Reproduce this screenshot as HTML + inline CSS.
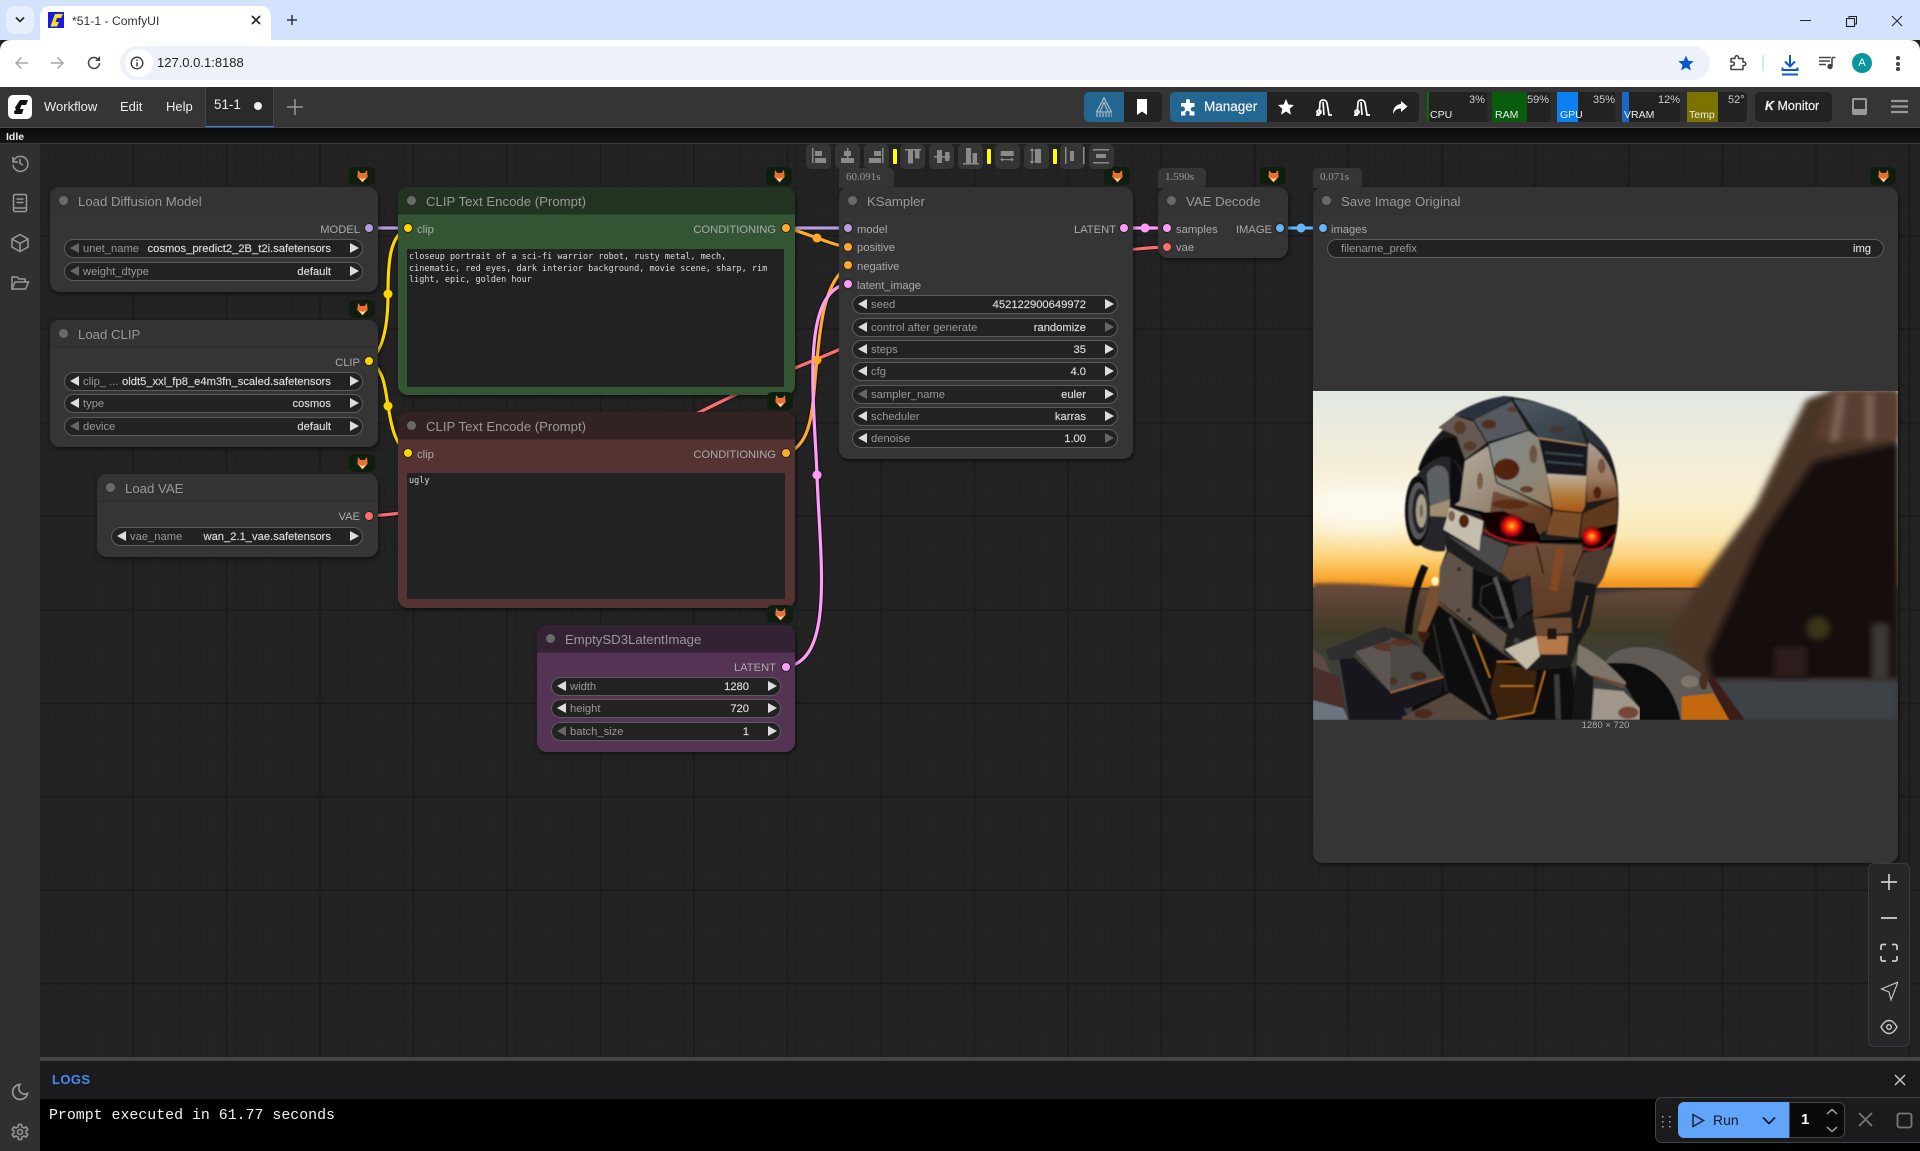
<!DOCTYPE html>
<html><head><meta charset="utf-8"><title>*51-1 - ComfyUI</title>
<style>
*{box-sizing:border-box}
html,body{margin:0;padding:0;width:1920px;height:1151px;overflow:hidden;background:#222;font-family:"Liberation Sans",sans-serif}
div,span,svg,i{position:absolute;white-space:nowrap}
.grid{left:40px;top:144px;width:1880px;height:913px;background-color:#232323;
background-image:linear-gradient(to right,#1b1b1b 1.5px,transparent 1.5px),linear-gradient(to bottom,#1b1b1b 1.5px,transparent 1.5px),linear-gradient(to right,#1f1f1f 1px,transparent 1px),linear-gradient(to bottom,#1f1f1f 1px,transparent 1px);
background-size:93.5px 93.5px,93.5px 93.5px,9.35px 9.35px,9.35px 9.35px;
background-position:-1.2px -96px,-1.2px -96px,-1.2px -96px,-1.2px -96px}
.n{background:#353535;border-radius:10px;box-shadow:1px 2px 5px rgba(0,0,0,.55);overflow:hidden}
.t{left:0;top:0;right:0;height:28px;background:#333;border-bottom:1px solid #2e2e2e;color:#999;font-size:13.2px;line-height:29px;padding-left:28px}
.t i{left:9px;top:9px;width:9px;height:9px;border-radius:50%;background:#6a6a6a}
.lb{font-size:11.2px;color:#aaa;line-height:14px;margin-top:1px}
.w{height:19px;border:1.5px solid #5c5c5c;border-radius:10px;background:#222;font-size:11.2px;line-height:16px;color:#999}
.w .l{left:4.5px;top:3px;width:0;height:0;border-top:5px solid transparent;border-bottom:5px solid transparent;border-right:9px solid #ddd}
.w .r{right:3.5px;top:3px;width:0;height:0;border-top:5px solid transparent;border-bottom:5px solid transparent;border-left:9px solid #ddd}
.w .k{left:18px;top:1px}
.w .v{right:31px;top:1px;color:#ddd;-webkit-text-stroke:.15px #ddd}
.w .d{border-right-color:#666}
.w .e{border-left-color:#666}
.dot{width:8px;height:8px;border-radius:50%;border:1px solid #222;box-sizing:content-box}
.ta{background:#222;font-family:"DejaVu Sans Mono","Liberation Mono",monospace;font-size:8.5px;line-height:11.5px;color:#ddd;padding:3px 2px;white-space:pre}
.fox{width:26px;height:18px;border-radius:5px;background:#0e1e0e}
.tm{height:20px;background:#353535;border-radius:5px 5px 0 0;color:#999;font-family:"Liberation Serif",serif;font-size:11px;line-height:18px;padding-left:7px}
.ab{top:144px;width:25px;height:25px;background:#353535;border-radius:5px}
.yb{top:149px;width:3.5px;height:15px;background:#ff0;border-radius:1px}
.mb{top:92px;height:30px;background:#222;border-radius:0}
.mon{color:#eee;font-size:12px}
.wire{fill:none}
</style></head><body>
<svg width="0" height="0" style="left:0;top:0"><symbol id="fx" viewBox="0 0 11 13"><path d="M1 0 3.500 3H7.500L10 0 10.700 7 5.500 12.500.3 7z" fill="#e9702e"/><path d="M2 7.500 5.500 12 9 7.500 5.500 9z" fill="#f6dcc0"/></symbol></svg>

<!-- browser chrome -->
<div style="left:0;top:0;width:1920px;height:40px;background:#d3e3fd"></div>
<div style="left:6px;top:6px;width:28px;height:28px;background:#e6eefc;border-radius:8px"></div>
<svg style="left:14px;top:15px" width="12" height="10"><path d="M2 2.500 6 6.500 10 2.500" fill="none" stroke="#222" stroke-width="1.600"/></svg>
<div style="left:40px;top:6px;width:231px;height:34px;background:#fff;border-radius:10px 10px 0 0"></div>
<div style="left:48px;top:12px;width:16px;height:16px;background:#1a1ae0"></div>
<svg style="left:48px;top:12px" width="16" height="16"><path d="M7 2h8l-2 4H9l-1.500 4H11l-2 4.500H2.500l1-3z" fill="#f4e616"/></svg>
<div style="left:72px;top:14px;font-size:12.200px;line-height:15px;color:#333">*51-1 - ComfyUI</div>
<svg style="left:250px;top:14px" width="12" height="12"><path d="M2 2 10 10M10 2 2 10" stroke="#222" stroke-width="1.600"/></svg>
<svg style="left:286px;top:14px" width="12" height="12"><path d="M6 1V11M1 6H11" stroke="#333" stroke-width="1.500"/></svg>
<svg style="left:1800px;top:14px" width="120" height="14"><path d="M0 6.500H11" stroke="#222" stroke-width="1"/><rect x="46.500" y="4.500" width="8" height="8" fill="none" stroke="#222" stroke-width="1.100"/><path d="M49 4V2.500H56.500V10H55" fill="none" stroke="#222" stroke-width="1"/><path d="M92 2 102 12M102 2 92 12" stroke="#222" stroke-width="1"/></svg>
<div style="left:0;top:40px;width:1920px;height:47px;background:#fff;border-radius:10px 10px 0 0"></div>
<svg style="left:14px;top:55px" width="90" height="16" fill="none"><path d="M14 8H2M7.500 2.500 2 8l5.500 5.500" stroke="#a3a6ab" stroke-width="1.500"/><path d="M37 8H49M43.500 2.500 49 8l-5.500 5.500" stroke="#a3a6ab" stroke-width="1.500"/><path d="M85.500 8A5.500 5.500 0 1 1 84 4.200" stroke="#444" stroke-width="1.500"/><path d="M85.500 1.500V5.500H81.500" fill="#444" stroke="#444" stroke-width="1"/></svg>
<div style="left:120px;top:46px;width:1590px;height:34px;border-radius:17px;background:#edf2fa"></div>
<div style="left:125px;top:49px;width:28px;height:28px;border-radius:50%;background:#fff"></div>
<svg style="left:130px;top:56px" width="14" height="14" fill="none"><circle cx="7" cy="7" r="5.800" stroke="#333" stroke-width="1.300"/><path d="M7 6.200V10.500M7 3.500V5" stroke="#333" stroke-width="1.400"/></svg>
<div style="left:157px;top:55px;font-size:13px;line-height:16px;color:#222">127.0.0.1:8188</div>
<svg style="left:1677px;top:54px" width="18" height="18"><path d="M9 1.500 11.200 6.700 16.800 7.200 12.500 10.900 13.800 16.400 9 13.500 4.200 16.400 5.500 10.900 1.200 7.200 6.800 6.700z" fill="#0b57d0"/></svg>
<svg style="left:1728px;top:53px" width="20" height="20" fill="none"><path d="M3 5.500H7V4.500a1.800 1.800 0 0 1 3.600 0V5.500H15V9h1a1.800 1.800 0 0 1 0 3.600h-1V16.500H3V12.500H5a1.800 1.800 0 0 0 0-3.500H3z" stroke="#444" stroke-width="1.500"/></svg>
<div style="left:1762px;top:55px;width:1.500px;height:16px;background:#d3e3fd"></div>
<svg style="left:1781px;top:54px" width="18" height="22" fill="none" stroke="#0b57d0" stroke-width="2"><path d="M9 1V12M4 7.500 9 12.500 14 7.500M1.500 13.500V16H16.500V13.500"/><path d="M1 20.500H17"/></svg>
<svg style="left:1819px;top:56px" width="17" height="14" fill="none" stroke="#444" stroke-width="1.400"><path d="M0 1.500H12M0 5H11M0 8.500H7"/><path d="M13 2V10" stroke-width="1.600"/><path d="M13 1.500H16.500"/><circle cx="11" cy="10.500" r="2" fill="#444"/></svg>
<div style="left:1852px;top:53px;width:20px;height:20px;border-radius:50%;background:#07979f;color:#fff;font-size:11px;line-height:20px;text-align:center">A</div>
<div style="left:1896px;top:56px;width:3.500px;height:3.500px;border-radius:50%;background:#444"></div>
<div style="left:1896px;top:62px;width:3.500px;height:3.500px;border-radius:50%;background:#444"></div>
<div style="left:1896px;top:67px;width:3.500px;height:3.500px;border-radius:50%;background:#444"></div>

<!-- menu bar -->
<div style="left:0;top:87px;width:1920px;height:41px;background:#353535;border-bottom:1px solid #4a4a4a"></div>
<div style="left:8px;top:95px;width:24px;height:24px;border-radius:5px;background:#fff"></div>
<svg style="left:8px;top:95px" width="24" height="24"><path d="M12 5h8l-2 5h-4.500L12 14h3.500L14 19H6.500l-.5-2.500 2-2-1-2z" fill="#111"/></svg>
<div style="left:44px;top:99px;font-size:13px;line-height:16px;color:#eee">Workflow</div>
<div style="left:120px;top:99px;font-size:13px;line-height:16px;color:#eee">Edit</div>
<div style="left:166px;top:99px;font-size:13px;line-height:16px;color:#eee">Help</div>
<div style="left:205px;top:87px;width:69px;height:40px;background:#2a2a2a;border-left:1px solid #444;border-right:1px solid #444;border-bottom:1.500px solid #3b82f6"></div>
<div style="left:214px;top:97px;font-size:13.400px;line-height:16px;color:#eee">51-1</div>
<div style="left:254px;top:102px;width:8px;height:8px;border-radius:50%;background:#eee"></div>
<svg style="left:287px;top:99px" width="16" height="16"><path d="M8 0V16M0 8H16" stroke="#999" stroke-width="1.500"/></svg>

<!-- top right tools -->
<div class="mb" style="left:1124px;width:38px;border-radius:0 5px 5px 0"></div>
<div class="mb" style="left:1084px;width:40px;background:#236692;border-radius:5px 0 0 5px"></div>
<svg style="left:1095px;top:97px" width="18" height="20" fill="none" stroke="#ccc" stroke-width="1"><path d="M9 1 1.500 15H16.500zM9 5 5 15M9 5 13 15"/><path d="M1 17H17M1 19H17" stroke-dasharray="2 1"/></svg>
<svg style="left:1136px;top:98px" width="12" height="18"><path d="M1 1H11V17L6 13.500 1 17z" fill="#fff"/></svg>
<div class="mb" style="left:1267px;width:152px;border-radius:0 5px 5px 0"></div>
<div class="mb" style="left:1170px;width:97px;background:#236692;border-radius:5px 0 0 5px"></div>
<svg style="left:1180px;top:99px" width="17" height="17"><path d="M6 1a2.200 2.200 0 0 1 4 1.500V4h4.500v4H13a2.200 2.200 0 1 0 0 4.400h1.500V16.500H9.500V15a2.200 2.200 0 1 0-4 0v1.500H1v-4h1.500a2.500 2.500 0 0 0 0-5H1V4h5z" fill="#fff"/></svg>
<div style="left:1204px;top:99px;font-size:13.500px;line-height:16px;color:#f2f2f2;-webkit-text-stroke:.2px #f2f2f2">Manager</div>
<svg style="left:1277px;top:98px" width="18" height="18"><path d="M9 1 11.300 6.500 17 7 12.700 10.800 14 16.700 9 13.500 4 16.700 5.300 10.800 1 7 6.700 6.500z" fill="#fff"/></svg>
<svg style="left:1314px;top:97px" width="60" height="20" fill="none" stroke="#fff" stroke-width="1.700"><path d="M2 18H5L6 6C6 2 12 2 13 6L15 18H18M9 5 10 18"/><circle cx="5" cy="15" r="2"/><path d="M40 18H43L44 6C44 2 50 2 51 6L53 18H56M47 5 48 18"/><circle cx="43" cy="15" r="2"/></svg>
<svg style="left:1392px;top:100px" width="16" height="15"><path d="M9 1 15.500 6.500 9 12V8.500C5 8.500 3 10 1 14 1 8 4 4.500 9 4z" fill="#fff"/></svg>

<div style="left:1427px;top:92px;width:320px;height:30px;background:#222;border-radius:5px"></div>
<div style="left:1487px;top:92px;width:5px;height:30px;background:#2c2c2c"></div>
<div style="left:1550px;top:92px;width:7px;height:30px;background:#2c2c2c"></div>
<div style="left:1615px;top:92px;width:7px;height:30px;background:#2c2c2c"></div>
<div style="left:1680px;top:92px;width:7px;height:30px;background:#2c2c2c"></div>
<div style="left:1427px;top:92px;width:2px;height:30px;background:#0a6a0a"></div>
<div style="left:1492px;top:92px;width:35px;height:30px;background:#075c0d"></div>
<div style="left:1557px;top:92px;width:21px;height:30px;background:#0b80f0"></div>
<div style="left:1622px;top:92px;width:7px;height:30px;background:#1767c3"></div>
<div style="left:1687px;top:92px;width:31px;height:30px;background:#7c7200"></div>
<div class="mon" style="left:1430px;top:108px;font-size:10.500px;line-height:14px">CPU</div>
<div class="mon" style="left:1495px;top:108px;font-size:10.500px;line-height:14px">RAM</div>
<div class="mon" style="left:1560px;top:108px;font-size:10.500px;line-height:14px">GPU</div>
<div class="mon" style="left:1624px;top:108px;font-size:10.500px;line-height:14px">VRAM</div>
<div class="mon" style="left:1689px;top:108px;font-size:10.500px;line-height:14px">Temp</div>
<div class="mon" style="left:1469px;top:93px;font-size:11px;line-height:14px;color:#ccc">3%</div>
<div class="mon" style="left:1527px;top:93px;font-size:11px;line-height:14px;color:#ccc">59%</div>
<div class="mon" style="left:1593px;top:93px;font-size:11px;line-height:14px;color:#ccc">35%</div>
<div class="mon" style="left:1658px;top:93px;font-size:11px;line-height:14px;color:#ccc">12%</div>
<div class="mon" style="left:1728px;top:93px;font-size:11px;line-height:14px;color:#ccc">52°</div>
<div style="left:1755px;top:92px;width:77px;height:30px;background:#222;border-radius:5px;font-size:12.500px;line-height:29px;color:#eee;padding-left:10px;-webkit-text-stroke:.2px #eee"><b style="font-style:italic">K</b> Monitor</div>
<svg style="left:1852px;top:98px" width="15" height="17"><rect x="0" y="0" width="15" height="17" rx="2" fill="#999"/><rect x="2" y="2" width="11" height="9" fill="#353535"/></svg>
<svg style="left:1891px;top:99px" width="17" height="15"><path d="M0 2H17M0 7.500H17M0 13H17" stroke="#999" stroke-width="2.200"/></svg>

<!-- idle bar -->
<div style="left:0;top:128px;width:1920px;height:16px;background:linear-gradient(#0a0a0a,#161616);border-bottom:1px solid #3a3a3a"></div>
<div style="left:6px;top:130px;font-size:10.500px;line-height:14px;color:#eee;font-weight:bold">Idle</div>

<!-- canvas -->
<div class="grid"></div>

<!-- links -->
<svg style="left:0;top:0" width="1920" height="1151" class="wire">
<g stroke="#161616" stroke-width="5.500" fill="none">
<path d="M369 228H848"/>
<path d="M369 361C385 350 388 320 388 294C388 260 390 235 408 228"/>
<path d="M369 361C385 370 385 390 388 405C391 425 395 445 408 453"/>
<path d="M786 228C800 230 830 245 848 247"/>
<path d="M786 453C815 445 812 400 817 360C821 320 825 282 848 266"/>
<path d="M369 516C480 510 620 450 700 412C740 392 770 378 817 359C900 325 1040 250 1167 247"/>
<path d="M786 667C835 660 820 560 817 475C814 400 800 290 848 284"/>
<path d="M1124 228H1167"/><path d="M1280 228H1322"/>
</g>
<g fill="none" stroke-width="3.200">
<path d="M369 228H848" stroke="#b39ddb"/>
<path d="M369 361C385 350 388 320 388 294C388 260 390 235 408 228" stroke="#ffd500"/>
<path d="M369 361C385 370 385 390 388 405C391 425 395 445 408 453" stroke="#ffd500"/>
<path d="M369 516C480 510 620 450 700 412C740 392 770 378 817 359C900 325 1040 250 1167 247" stroke="#ff6e6e"/>
<path d="M786 228C800 230 830 245 848 247" stroke="#ffa931"/>
<path d="M786 453C815 445 812 400 817 360C821 320 825 282 848 266" stroke="#ffa931"/>
<path d="M786 667C835 660 820 560 817 475C814 400 800 290 848 284" stroke="#ff9cf9"/>
<path d="M1124 228H1167" stroke="#ff9cf9"/><path d="M1280 228H1322" stroke="#64b5f6"/>
</g>
<circle cx="388" cy="294" r="4.500" fill="#ffd500"/><circle cx="388" cy="406" r="4.500" fill="#ffd500"/>
<circle cx="817" cy="238" r="4.500" fill="#ffa931"/><circle cx="817" cy="360" r="4.500" fill="#ffa931"/>
<circle cx="817" cy="475" r="4.500" fill="#ff9cf9"/><circle cx="1145" cy="228" r="4.500" fill="#ff9cf9"/><circle cx="1301" cy="228" r="4.500" fill="#64b5f6"/>
</svg>

<!-- Load Diffusion -->
<div class="n" style="left:50px;top:187px;width:328px;height:105px"><div class="t"><i></i>Load Diffusion Model</div></div>
<div class="lb" style="left:300px;top:222px;width:60px;text-align:right">MODEL</div>
<div class="w" style="left:64px;top:239px;width:299px"><i class="l d"></i><span class="k">unet_name</span><span class="v">cosmos_predict2_2B_t2i.safetensors</span><i class="r"></i></div>
<div class="w" style="left:64px;top:262px;width:299px"><i class="l d"></i><span class="k">weight_dtype</span><span class="v">default</span><i class="r"></i></div>

<!-- Load CLIP -->
<div class="n" style="left:50px;top:320px;width:328px;height:127px"><div class="t"><i></i>Load CLIP</div></div>
<div class="lb" style="left:300px;top:355px;width:60px;text-align:right">CLIP</div>
<div class="w" style="left:64px;top:372px;width:299px"><i class="l"></i><span class="k">clip_ ...</span><span class="v">oldt5_xxl_fp8_e4m3fn_scaled.safetensors</span><i class="r"></i></div>
<div class="w" style="left:64px;top:394px;width:299px"><i class="l"></i><span class="k">type</span><span class="v">cosmos</span><i class="r"></i></div>
<div class="w" style="left:64px;top:417px;width:299px"><i class="l d"></i><span class="k">device</span><span class="v">default</span><i class="r"></i></div>

<!-- Load VAE -->
<div class="n" style="left:97px;top:474px;width:281px;height:83px"><div class="t"><i></i>Load VAE</div></div>
<div class="lb" style="left:300px;top:509px;width:60px;text-align:right">VAE</div>
<div class="w" style="left:111px;top:527px;width:252px"><i class="l"></i><span class="k">vae_name</span><span class="v">wan_2.1_vae.safetensors</span><i class="r"></i></div>

<!-- CLIP green -->
<div class="n" style="left:398px;top:187px;width:397px;height:208px;background:#335533"><div class="t" style="background:#223322;border-color:#2a402a"><i></i>CLIP Text Encode (Prompt)</div></div>
<div class="lb" style="left:417px;top:222px">clip</div>
<div class="lb" style="left:660px;top:222px;width:116px;text-align:right">CONDITIONING</div>
<div class="ta" style="left:407px;top:249px;width:377px;height:138px">closeup portrait of a sci-fi warrior robot, rusty metal, mech,
cinematic, red eyes, dark interior background, movie scene, sharp, rim
light, epic, golden hour</div>

<!-- CLIP red -->
<div class="n" style="left:398px;top:412px;width:397px;height:196px;background:#553333"><div class="t" style="background:#332222;border-color:#452c2c"><i></i>CLIP Text Encode (Prompt)</div></div>
<div class="lb" style="left:417px;top:447px">clip</div>
<div class="lb" style="left:660px;top:447px;width:116px;text-align:right">CONDITIONING</div>
<div class="ta" style="left:407px;top:473px;width:378px;height:126px">ugly</div>

<!-- Empty latent -->
<div class="n" style="left:537px;top:625px;width:258px;height:127px;background:#553355"><div class="t" style="background:#332233;border-color:#452c45"><i></i>EmptySD3LatentImage</div></div>
<div class="lb" style="left:716px;top:660px;width:60px;text-align:right">LATENT</div>
<div class="w" style="left:551px;top:677px;width:230px"><i class="l"></i><span class="k">width</span><span class="v">1280</span><i class="r"></i></div>
<div class="w" style="left:551px;top:699px;width:230px"><i class="l"></i><span class="k">height</span><span class="v">720</span><i class="r"></i></div>
<div class="w" style="left:551px;top:722px;width:230px"><i class="l d"></i><span class="k">batch_size</span><span class="v">1</span><i class="r"></i></div>

<!-- KSampler -->
<div class="tm" style="left:839px;top:168px;width:55px">60.091s</div>
<div class="n" style="left:839px;top:187px;width:294px;height:272px"><div class="t"><i></i>KSampler</div></div>
<div class="lb" style="left:857px;top:222px">model</div>
<div class="lb" style="left:857px;top:240px">positive</div>
<div class="lb" style="left:857px;top:259px">negative</div>
<div class="lb" style="left:857px;top:278px">latent_image</div>
<div class="lb" style="left:1050px;top:222px;width:66px;text-align:right">LATENT</div>
<div class="w" style="left:852px;top:295px;width:266px"><i class="l"></i><span class="k">seed</span><span class="v">452122900649972</span><i class="r"></i></div>
<div class="w" style="left:852px;top:318px;width:266px"><i class="l"></i><span class="k">control after generate</span><span class="v">randomize</span><i class="r e"></i></div>
<div class="w" style="left:852px;top:340px;width:266px"><i class="l"></i><span class="k">steps</span><span class="v">35</span><i class="r"></i></div>
<div class="w" style="left:852px;top:362px;width:266px"><i class="l"></i><span class="k">cfg</span><span class="v">4.0</span><i class="r"></i></div>
<div class="w" style="left:852px;top:385px;width:266px"><i class="l d"></i><span class="k">sampler_name</span><span class="v">euler</span><i class="r"></i></div>
<div class="w" style="left:852px;top:407px;width:266px"><i class="l"></i><span class="k">scheduler</span><span class="v">karras</span><i class="r"></i></div>
<div class="w" style="left:852px;top:429px;width:266px"><i class="l"></i><span class="k">denoise</span><span class="v">1.00</span><i class="r e"></i></div>

<!-- VAE Decode -->
<div class="tm" style="left:1158px;top:168px;width:48px">1.590s</div>
<div class="n" style="left:1158px;top:187px;width:130px;height:71px"><div class="t"><i></i>VAE Decode</div></div>
<div class="lb" style="left:1176px;top:222px">samples</div>
<div class="lb" style="left:1176px;top:240px">vae</div>
<div class="lb" style="left:1212px;top:222px;width:60px;text-align:right">IMAGE</div>

<!-- Save Image -->
<div class="tm" style="left:1313px;top:168px;width:49px">0.071s</div>
<div class="n" style="left:1313px;top:187px;width:585px;height:676px"><div class="t"><i></i>Save Image Original</div></div>
<div class="lb" style="left:1331px;top:222px">images</div>
<div class="w" style="left:1327px;top:239px;width:557px"><span class="k" style="left:13px">filename_prefix</span><span class="v" style="right:12px">img</span></div>

<svg style="left:1313px;top:391px" width="585" height="329" viewBox="33 33 1479 987" preserveAspectRatio="none">
<defs>
<linearGradient id="sky" x1="0" y1="0" x2="0" y2="1"><stop offset="0" stop-color="#e2e8e2"/><stop offset=".28" stop-color="#f0ecdb"/><stop offset=".54" stop-color="#f9f0d2"/><stop offset=".72" stop-color="#fae9b8"/><stop offset=".84" stop-color="#fcd47e"/><stop offset=".93" stop-color="#fab23e"/><stop offset="1" stop-color="#f09018"/></linearGradient>
<linearGradient id="gr" x1="0" y1="0" x2="0" y2="1"><stop offset="0" stop-color="#6a4c3c"/><stop offset=".2" stop-color="#544030"/><stop offset=".36" stop-color="#403b26"/><stop offset=".52" stop-color="#3e3f34"/><stop offset="1" stop-color="#3c4144"/></linearGradient>
<linearGradient id="fh" x1="0" y1="0" x2="0" y2="1"><stop offset="0" stop-color="#bcb2a4"/><stop offset=".55" stop-color="#b07a3c"/><stop offset="1" stop-color="#a8560f"/></linearGradient>
<linearGradient id="top" x1="0" y1="0" x2="1" y2="1"><stop offset="0" stop-color="#4e5964"/><stop offset="1" stop-color="#2f3840"/></linearGradient>
<linearGradient id="fc" x1="0" y1="0" x2="0" y2="1"><stop offset="0" stop-color="#6a4c38"/><stop offset="1" stop-color="#5c3a22"/></linearGradient>
<linearGradient id="mf" x1="0" y1="0" x2="1" y2="1"><stop offset="0" stop-color="#80878c"/><stop offset=".7" stop-color="#8d8676"/><stop offset="1" stop-color="#a07a58"/></linearGradient>
<linearGradient id="rf" x1="0" y1="0" x2="0" y2="1"><stop offset="0" stop-color="#a89e94"/><stop offset=".6" stop-color="#9a7a60"/><stop offset="1" stop-color="#70401e"/></linearGradient>
<linearGradient id="sd" x1="0" y1="0" x2="1" y2="1"><stop offset="0" stop-color="#b8ae9e"/><stop offset=".6" stop-color="#8e806e"/><stop offset="1" stop-color="#55301a"/></linearGradient>
<radialGradient id="eye"><stop offset="0" stop-color="#ffd848"/><stop offset=".22" stop-color="#ff6a10"/><stop offset=".48" stop-color="#ff1208"/><stop offset=".75" stop-color="#a00808" stop-opacity=".7"/><stop offset="1" stop-color="#500" stop-opacity="0"/></radialGradient>
<filter id="b40" x="-50%" y="-50%" width="200%" height="200%"><feGaussianBlur stdDeviation="40"/></filter>
<filter id="b8" x="-20%" y="-20%" width="140%" height="140%"><feGaussianBlur stdDeviation="9"/></filter>
<filter id="b1"><feGaussianBlur stdDeviation="1.200"/></filter>
<filter id="b2"><feGaussianBlur stdDeviation="2"/></filter>
<filter id="b4" x="-50%" y="-50%" width="200%" height="200%"><feGaussianBlur stdDeviation="5"/></filter>
<clipPath id="cl"><rect x="33" y="33" width="1479" height="987"/></clipPath>
</defs>
<g clip-path="url(#cl)">
<rect x="33" y="33" width="1479" height="590" fill="url(#sky)"/>
<ellipse cx="170" cy="385" rx="190" ry="70" fill="#fff" opacity=".75" filter="url(#b40)"/>
<path d="M33 610C150 605 250 620 350 632L750 642C850 625 950 628 1010 630V1020H33Z" fill="url(#gr)" filter="url(#b4)"/>
<path d="M1340 33H1512V905H1010L925 780 1000 625 1150 380 1280 60Z" fill="#4a3628" filter="url(#b8)"/>
<path d="M1345 33H1512V180H1300Z" fill="#5a3e32" filter="url(#b8)"/>
<path d="M1370 40 1350 185M1440 40V180" stroke="#806a58" stroke-width="20" filter="url(#b8)"/>
<path d="M1512 190 1300 245 1170 470 1030 830 1040 900H1512Z" fill="#15100d" filter="url(#b8)"/>
<path d="M1040 900H1512V1020H1100Z" fill="#3c4347" filter="url(#b8)"/>
<ellipse cx="1310" cy="745" rx="30" ry="35" fill="#3a3615" filter="url(#b8)"/>
<rect x="1445" y="730" width="45" height="170" fill="#3a3836" filter="url(#b8)"/>
<rect x="1200" y="800" width="80" height="90" fill="#2d1e1e" filter="url(#b8)"/>
<g filter="url(#b1)">
<!-- left shoulder outer -->
<path d="M33 808 62 835 122 1020H33Z" fill="#5c4a44"/>
<path d="M33 860 100 890 120 1020H33Z" fill="#4a2f2a"/>
<path d="M33 960 110 985 122 1020H33Z" fill="#6a7580"/>
<path d="M100 835 135 830 240 950 280 1020H125Z" fill="#13141a"/>
<path d="M65 810 210 740 270 770 140 815 135 835 75 840Z" fill="#2e2d2e"/>
<path d="M140 815 258 768 365 885 235 945Z" fill="#5c5652"/>
<ellipse cx="230" cy="800" rx="45" ry="14" fill="#5a2d20" opacity=".8"/>
<!-- right shoulder outer -->
<path d="M770 850C790 800 870 780 950 830C1030 880 1080 960 1125 1020H960C950 930 900 860 830 850C800 845 775 850 770 850Z" fill="#5f5a55"/>
<path d="M775 850 835 850C900 860 950 930 962 1020H820L850 970 815 900Z" fill="#080808"/>
<path d="M965 950 1045 940 1085 1020H965Z" fill="#c4680f"/>
<path d="M1045 890 1125 1020H1085L1030 900Z" fill="#3a1f14"/>
<ellipse cx="985" cy="905" rx="22" ry="18" fill="#7d766c"/>
<ellipse cx="1020" cy="905" rx="10" ry="25" fill="#4a2d20"/>
</g>
</g>
</svg>

<!-- robot head, detail layer -->
<svg style="left:1390px;top:391px" width="250" height="329" viewBox="0 0 750 987">
<g filter="url(#b2)">
<!-- neck -->
<path d="M140 640 340 790 420 840 540 820 600 987H60L110 720Z" fill="#0b0b0c"/>
<path d="M320 815 440 840 430 960 325 980 300 900Z" fill="#3c2010"/>
<path d="M330 885H430M465 840 430 965 320 985M250 730 300 860M320 812H440" stroke="#d08020" stroke-width="4" fill="none"/>
<path d="M180 680 300 970" stroke="#45413d" stroke-width="10"/>
<path d="M500 850 505 985" stroke="#3a3a3a" stroke-width="16"/>
<path d="M545 830 575 985M130 700 170 900" stroke="#222224" stroke-width="8"/>
<!-- cable -->
<path d="M120 585 150 585 145 640 110 720 80 730Z" fill="#7a5030"/>
<path d="M105 525C80 580 60 650 55 730" stroke="#0f0f10" stroke-width="22" fill="none"/>
<ellipse cx="135" cy="570" rx="11" ry="13" fill="#fff6c0"/>
<!-- head base -->
<path d="M85 235C110 150 190 60 340 15C470 25 600 90 650 170C690 240 690 340 680 420L665 490 620 570 590 700 545 820 420 840 340 780 240 710 145 625 150 530 170 480 160 420 180 350Z" fill="#1e1e1f"/>
<!-- ear -->
<path d="M85 235C110 170 150 130 195 140L225 205 225 320H150Z" fill="#101011"/>
<path d="M150 200C190 185 225 230 225 290L205 350 175 350 165 480C100 490 45 440 45 360C45 290 90 220 150 200Z" fill="#26282b"/>
<path d="M110 250C130 215 165 215 175 250L180 345 120 345Z" fill="#5d6064"/>
<path d="M120 345 180 325 175 378 120 375Z" fill="#a08c72"/>
<path d="M180 200C205 215 220 250 222 300L205 345 180 345Z" fill="#0f1012"/>
<ellipse cx="82" cy="360" rx="37" ry="105" fill="#0d0d0e"/>
<ellipse cx="85" cy="360" rx="30" ry="85" fill="#55565a"/>
<ellipse cx="90" cy="360" rx="23" ry="68" fill="#202022"/>
<ellipse cx="94" cy="360" rx="16" ry="50" fill="#a89d88"/>
<ellipse cx="94" cy="360" rx="5" ry="20" fill="#6d6657"/>
<!-- dome panels -->
<path d="M195 70C240 40 300 20 345 15L365 25 250 85Z" fill="#2b333c"/>
<path d="M250 87 365 30 415 118 290 155Z" fill="#55595e"/>
<path d="M370 25C450 30 530 60 560 80L590 160 445 140 420 100Z" fill="url(#top)"/>
<path d="M565 85C610 120 640 150 660 190L595 150Z" fill="#2c3138"/>
<path d="M145 110 195 72 250 90 290 155 225 205 200 135Z" fill="#655a52"/>
<path d="M295 160 415 120 445 140 470 250 485 350 320 275Z" fill="url(#mf)"/>
<path d="M225 210 295 165 320 275 480 355 485 400 450 430 410 395 270 360 190 345 210 330Z" fill="url(#sd)"/>
<path d="M310 300 480 355 485 430 410 395 300 360Z" fill="#643a22" opacity=".75"/>
<path d="M450 150 585 165 585 250 470 240Z" fill="#12171c"/>
<path d="M465 185 580 195M470 212 580 222" stroke="#3a4650" stroke-width="6"/>
<path d="M438 140 590 163" stroke="#b98a62" stroke-width="4"/>
<path d="M470 248 590 255 585 345 575 365 490 355Z" fill="url(#fh)"/>
<path d="M595 155C640 180 680 250 682 318L590 335 590 255Z" fill="url(#rf)"/>
<path d="M490 358 575 368 565 440 470 430Z" fill="#7a4e2c"/>
<path d="M580 365 682 320 680 405 570 440Z" fill="#5e3a1e"/>
<path d="M160 415 180 350 280 390 268 480Z" fill="#c6bead"/>
<!-- rust -->
<g fill="#52240e">
<ellipse cx="350" cy="235" rx="38" ry="32"/><ellipse cx="297" cy="100" rx="22" ry="14" opacity=".8"/><ellipse cx="222" cy="390" rx="15" ry="20"/>
<ellipse cx="410" cy="295" rx="20" ry="10" opacity=".7"/><ellipse cx="622" cy="305" rx="12" ry="18"/><ellipse cx="360" cy="340" rx="55" ry="14" opacity=".7"/>
<ellipse cx="240" cy="165" rx="20" ry="14" opacity=".6"/><ellipse cx="210" cy="110" rx="18" ry="20" opacity=".6"/><ellipse cx="500" cy="115" rx="22" ry="10" opacity=".45"/>
<ellipse cx="430" cy="190" rx="12" ry="28" opacity=".5"/><ellipse cx="370" cy="55" rx="18" ry="8" opacity=".5"/><ellipse cx="635" cy="225" rx="12" ry="22" opacity=".5"/><ellipse cx="270" cy="270" rx="9" ry="25" opacity=".5"/><ellipse cx="185" cy="375" rx="10" ry="16" opacity=".6"/>
</g>
<path d="M320 275 485 352 490 358 575 366 682 320M190 345 275 365M295 160 320 275M250 87 290 155 415 118M225 208 295 160M365 25 445 140M195 72 250 90" stroke="#0c0c0c" stroke-width="3.500" fill="none"/>
<!-- eye sockets -->
<path d="M270 365 340 360 430 400 450 450 350 455 300 430Z" fill="#150404"/>
<path d="M572 452 610 420 675 405 665 465 590 475Z" fill="#150505"/>
<path d="M280 415C310 440 360 458 440 458M578 472C620 482 650 475 672 430" stroke="#c81414" stroke-width="4" fill="none"/>
<path d="M190 345 275 365 320 395 430 400 450 452 570 450 600 420 680 403" stroke="#060606" stroke-width="8" fill="none"/>
<ellipse cx="365" cy="405" rx="42" ry="40" fill="url(#eye)"/>
<ellipse cx="605" cy="436" rx="36" ry="34" fill="url(#eye)"/>
<!-- face -->
<path d="M345 470 440 457 575 462 580 490 555 570 540 660 430 680 420 555 360 570 330 540Z" fill="url(#fc)"/>
<path d="M512 470 490 600" stroke="#8c4a1e" stroke-width="24" opacity=".8"/>
<path d="M440 465 460 548M580 480 550 555M355 465 330 540" stroke="#111" stroke-width="4"/>
<path d="M580 485 670 470 640 560 590 640 555 570Z" fill="#4c3a2e"/>
<path d="M170 432 268 482 272 430 355 465 330 545 250 490Z" fill="#4c4a48"/>
<path d="M175 482 248 530 245 650 350 730 340 785 145 625 150 530Z" fill="#5e5248"/>
<path d="M250 535 360 575 420 555 430 665 375 690 340 710 250 650Z" fill="#090909"/>
<path d="M275 590 320 570 350 680 310 680 270 640Z" fill="none" stroke="#36363a" stroke-width="4"/>
<path d="M315 560 365 710" stroke="#7d7d7d" stroke-width="13" stroke-dasharray="2.500 2.500"/>
<path d="M365 585 415 550 430 650 385 685Z" fill="#2c2c2e"/>
<path d="M375 690 545 680 550 715 535 830 415 838 345 780 380 745Z" fill="#1e1d1c"/>
<path d="M430 683 545 680 545 725 440 735Z" fill="#6c4a32"/>
<path d="M440 735 535 735 530 790 450 790Z" fill="#b5784a"/>
<rect x="472" y="712" width="28" height="33" fill="#1a1410"/>
<path d="M345 775 440 735 450 795 410 835Z" fill="#c4bba9"/>
<circle cx="380" cy="750" r="10" fill="#3a3a3a"/>
<path d="M555 570 620 580 600 700 560 770 545 680Z" fill="#141312"/>
<path d="M592 615 566 710" stroke="#a06a3a" stroke-width="4" stroke-dasharray="5 3"/>
<circle cx="207" cy="535" r="6" fill="#2c2a28"/><circle cx="205" cy="658" r="6" fill="#2c2a28"/><circle cx="238" cy="685" r="6" fill="#2c2a28"/>
<!-- near shoulders -->
<path d="M0 712 35 725 90 765 0 738Z" fill="#2b2b2c"/>
<path d="M80 720 122 725 100 760Z" fill="#3a1a10"/>
<path d="M0 737 80 765 160 855 5 905 0 905Z" fill="#4e4844"/>
<ellipse cx="35" cy="755" rx="35" ry="10" fill="#5a2d20" opacity=".85"/><ellipse cx="85" cy="855" rx="25" ry="14" fill="#3e2218" opacity=".85"/><ellipse cx="10" cy="870" rx="12" ry="12" fill="#4a2a1c" opacity=".8"/>
<path d="M0 905 160 858" stroke="#b56a30" stroke-width="4"/>
<path d="M0 908 165 862 150 910 60 950 0 960Z" fill="#18191a"/>
<path d="M35 978 180 905 300 987H35Z" fill="#54483e"/>
<ellipse cx="100" cy="968" rx="28" ry="14" fill="#4a2416" opacity=".8"/>
<path d="M565 760C610 780 660 820 710 875L700 890 610 860 560 820Z" fill="#7c7468"/>
<path d="M605 855 705 885" stroke="#6a3a20" stroke-width="7"/>
<path d="M560 820 610 860 605 987H545Z" fill="#121212"/>
<path d="M612 892 700 900 750 950V987H605Z" fill="#a09689"/>
<ellipse cx="715" cy="965" rx="30" ry="18" fill="#6a3020" opacity=".8"/>
</g>
</svg>
<div style="left:1313px;top:720px;width:585px;text-align:center;font-size:9.500px;line-height:12px;color:#aaa">1280 × 720</div>

<!-- slots -->
<i class="dot" style="left:364px;top:223px;background:#b39ddb"></i>
<i class="dot" style="left:364px;top:356px;background:#ffd500"></i>
<i class="dot" style="left:364px;top:511px;background:#ff6e6e"></i>
<i class="dot" style="left:403px;top:223px;background:#ffd500"></i>
<i class="dot" style="left:781px;top:223px;background:#ffa931"></i>
<i class="dot" style="left:403px;top:448px;background:#ffd500"></i>
<i class="dot" style="left:781px;top:448px;background:#ffa931"></i>
<i class="dot" style="left:781px;top:662px;background:#ff9cf9"></i>
<i class="dot" style="left:843px;top:223px;background:#b39ddb"></i>
<i class="dot" style="left:843px;top:242px;background:#ffa931"></i>
<i class="dot" style="left:843px;top:260px;background:#ffa931"></i>
<i class="dot" style="left:843px;top:279px;background:#ff9cf9"></i>
<i class="dot" style="left:1119px;top:223px;background:#ff9cf9"></i>
<i class="dot" style="left:1162px;top:223px;background:#ff9cf9"></i>
<i class="dot" style="left:1162px;top:242px;background:#ff6e6e"></i>
<i class="dot" style="left:1275px;top:223px;background:#64b5f6"></i>
<i class="dot" style="left:1318px;top:223px;background:#64b5f6"></i>

<!-- fox badges -->
<div class="fox" style="left:349px;top:167px"></div><svg style="left:357px;top:170px" width="11" height="13"><use href="#fx"/></svg>
<div class="fox" style="left:349px;top:300px"></div><svg style="left:357px;top:303px" width="11" height="13"><use href="#fx"/></svg>
<div class="fox" style="left:349px;top:454px"></div><svg style="left:357px;top:457px" width="11" height="13"><use href="#fx"/></svg>
<div class="fox" style="left:766px;top:167px"></div><svg style="left:774px;top:170px" width="11" height="13"><use href="#fx"/></svg>
<div class="fox" style="left:767px;top:392px"></div><svg style="left:775px;top:395px" width="11" height="13"><use href="#fx"/></svg>
<div class="fox" style="left:767px;top:605px"></div><svg style="left:775px;top:608px" width="11" height="13"><use href="#fx"/></svg>
<div class="fox" style="left:1104px;top:167px"></div><svg style="left:1112px;top:170px" width="11" height="13"><use href="#fx"/></svg>
<div class="fox" style="left:1260px;top:167px"></div><svg style="left:1268px;top:170px" width="11" height="13"><use href="#fx"/></svg>
<div class="fox" style="left:1870px;top:167px"></div><svg style="left:1878px;top:170px" width="11" height="13"><use href="#fx"/></svg>

<!-- align toolbar -->
<div class="ab" style="left:806px"></div><div class="ab" style="left:835px"></div><div class="ab" style="left:864px"></div>
<div class="yb" style="left:893px"></div>
<div class="ab" style="left:900px"></div><div class="ab" style="left:929px"></div><div class="ab" style="left:958px"></div>
<div class="yb" style="left:987px"></div>
<div class="ab" style="left:995px"></div><div class="ab" style="left:1024px"></div>
<div class="yb" style="left:1053px"></div>
<div class="ab" style="left:1060px"></div><div class="ab" style="left:1089px"></div>
<svg style="left:806px;top:144px" width="310" height="25" fill="#8a8a8a" stroke="none">
<rect x="6" y="4" width="1.500" height="15"/><rect x="9" y="7" width="7" height="5"/><rect x="9" y="14" width="11" height="5"/>
<rect x="41" y="4" width="1.500" height="15"/><rect x="38" y="7" width="7" height="5"/><rect x="35" y="14" width="13" height="5"/>
<rect x="76" y="4" width="1.500" height="15"/><rect x="68" y="7" width="7" height="5"/><rect x="63" y="14" width="12" height="5"/>
<rect x="99" y="5" width="16" height="1.500"/><rect x="102" y="6.500" width="5" height="13"/><rect x="109" y="6.500" width="4.500" height="8"/>
<rect x="128" y="12" width="16" height="1.500"/><rect x="131" y="6" width="5" height="13"/><rect x="139" y="8" width="4.500" height="9"/>
<rect x="157" y="19" width="16" height="1.500"/><rect x="160" y="4" width="5" height="15"/><rect x="166.500" y="9" width="4.500" height="10"/>
<rect x="194.700" y="7" width="13" height="5"/><rect x="195" y="15" width="12" height="1.200"/><path d="M194 15.500 197 13.500V17.500zM208 15.500 205 13.500V17.500z"/>
<rect x="225.500" y="6" width="1.300" height="12"/><path d="M226 4 228.500 7H223.500zM226 20 228.500 17H223.500z"/><rect x="229" y="5" width="6" height="14"/>
<rect x="259" y="3" width="1.500" height="17"/><rect x="264" y="7" width="4" height="10"/><rect x="277" y="3" width="1.500" height="17"/>
<rect x="287" y="5" width="16" height="1.500"/><rect x="290" y="10" width="10" height="4"/><rect x="287" y="18" width="16" height="1.500"/>
</svg>

<!-- sidebar -->
<div style="left:0;top:144px;width:40px;height:1007px;background:#303030"></div>
<svg style="left:10px;top:153px" width="20" height="20" fill="none" stroke="#999" stroke-width="1.500"><path d="M3 4V9H8"/><path d="M3.500 8A7.500 7.500 0 1 1 3 12"/><path d="M10 6V10.500L13 12"/></svg>
<svg style="left:12px;top:193px" width="16" height="20" fill="none" stroke="#999" stroke-width="1.500"><rect x="1.500" y="1.500" width="13" height="17" rx="1.500"/><path d="M4.500 6H11.500M4.500 9.500H11.500M1.500 15H14.500"/></svg>
<svg style="left:10px;top:233px" width="20" height="20" fill="none" stroke="#999" stroke-width="1.500"><path d="M10 1.500 18 6V14L10 18.500 2 14V6zM2 6 10 10.500 18 6M10 10.500V18.500"/></svg>
<svg style="left:10px;top:274px" width="20" height="18" fill="none" stroke="#999" stroke-width="1.500"><path d="M2 15V3H7L9 5H15V8M2 15 5 8H18.500L15.500 15Z"/></svg>
<svg style="left:11px;top:1083px" width="18" height="18" fill="none" stroke="#999" stroke-width="1.700"><path d="M9 1.500A7.500 7.500 0 1 0 16.500 10.500 6 6 0 0 1 9 1.500Z"/></svg>
<svg style="left:11px;top:1123px" width="18" height="18" fill="none" stroke="#999" stroke-width="1.500"><circle cx="9" cy="9" r="2.500"/><path d="M7.500 1.500H10.500L11 4 13 5 15.300 4 16.800 6.500 15 8 15 10 16.800 11.500 15.300 14 13 13 11 14 10.500 16.500H7.500L7 14 5 13 2.700 14 1.200 11.500 3 10 3 8 1.200 6.500 2.700 4 5 5 7 4Z"/></svg>

<!-- graph controls -->
<div style="left:1868px;top:863px;width:42px;height:184px;background:#27272a;border:1px solid #3a3a3e;border-radius:6px"></div>
<svg style="left:1880px;top:873px" width="18" height="170" fill="none" stroke="#ccc" stroke-width="1.700">
<path d="M9 1V17M1 9H17"/><path d="M1 45H17" stroke-width="1.800"/>
<path d="M1 77V73a1.500 1.500 0 0 1 1.500-1.500H6M12 71.500H15.500A1.500 1.500 0 0 1 17 73V77M17 83V86.500A1.500 1.500 0 0 1 15.500 88H12M6 88H2.500A1.500 1.500 0 0 1 1 86.500V83"/>
<path d="M18 109 1.500 116 9 119 11 127Z" stroke-width="1.100"/>
<path d="M1 154C4 149 6 147.500 9 147.500S14 149 17 154C14 159 12 160.500 9 160.500S4 159 1 154Z" stroke-width="1.400"/><circle cx="9" cy="154" r="2.300" stroke-width="1.400"/>
</svg>

<!-- logs panel -->
<div style="left:40px;top:1057px;width:1880px;height:4px;background:#444448"></div>
<div style="left:40px;top:1061px;width:1880px;height:38px;background:#1b1b1e"></div>
<div style="left:40px;top:1099px;width:1880px;height:52px;background:#000"></div>
<div style="left:52px;top:1072px;font-size:13px;line-height:16px;color:#4a8af0;font-weight:bold;letter-spacing:.4px">LOGS</div>
<svg style="left:1893px;top:1073px" width="14" height="14"><path d="M2 2 12 12M12 2 2 12" stroke="#ccc" stroke-width="1.400"/></svg>
<div style="left:49px;top:1108px;font-family:'Liberation Mono',monospace;font-size:14.900px;line-height:17px;color:#f2f2f2">Prompt executed in 61.77 seconds</div>

<!-- run bar -->
<div style="left:1655px;top:1097px;width:275px;height:46px;background:#1b1b1e;border:1px solid #444;border-radius:7px"></div>
<svg style="left:1662px;top:1116px" width="10" height="14" fill="#aaa"><rect x="0" y="0" width="1.500" height="1.500"/><rect x="7" y="0" width="1.500" height="1.500"/><rect x="0" y="5" width="1.500" height="1.500"/><rect x="7" y="5" width="1.500" height="1.500"/><rect x="0" y="10" width="1.500" height="1.500"/><rect x="7" y="10" width="1.500" height="1.500"/></svg>
<div style="left:1678px;top:1102px;width:111px;height:36px;background:#60a5fa;border-radius:6px 0 0 6px"></div>
<svg style="left:1691px;top:1113px" width="14" height="15" fill="none" stroke="#1b2430" stroke-width="1.500"><path d="M2 1.500V13.500L12.500 7.500Z"/></svg>
<div style="left:1713px;top:1112px;font-size:14px;line-height:16px;color:#111827">Run</div>
<svg style="left:1762px;top:1116px" width="14" height="9" fill="none" stroke="#111827" stroke-width="1.700"><path d="M1 1.500 7 7.500 13 1.500"/></svg>
<div style="left:1789px;top:1102px;width:56px;height:36px;background:#0a0a0d;border:1px solid #444;border-radius:0 6px 6px 0"></div>
<div style="left:1801px;top:1111px;font-size:15px;font-weight:bold;line-height:18px;color:#fff">1</div>
<svg style="left:1826px;top:1108px" width="12" height="25" fill="none" stroke="#aaa" stroke-width="1.500"><path d="M1 6 6 1.500 11 6M1 19 6 23.500 11 19"/></svg>
<svg style="left:1858px;top:1112px" width="15" height="15"><path d="M1 1 14 14M14 1 1 14" stroke="#777" stroke-width="1.800"/></svg>
<svg style="left:1896px;top:1112px" width="18" height="17" fill="none" stroke="#777" stroke-width="1.800"><rect x="1.500" y="1.500" width="14" height="14" rx="2"/></svg>
</body></html>
